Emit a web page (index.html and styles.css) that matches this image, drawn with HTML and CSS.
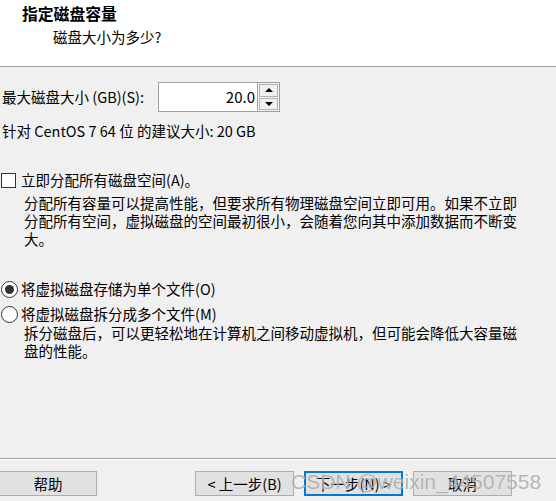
FILE: index.html
```
<!DOCTYPE html>
<html lang="zh-CN">
<head>
<meta charset="utf-8">
<title>指定磁盘容量</title>
<link rel="stylesheet" href="styles.css">
</head>
<body>
<div class="dialog">
  <header class="head">
    <div class="title">指定磁盘容量</div>
    <div class="subtitle">磁盘大小为多少?</div>
  </header>
  <main class="content">
    <div class="size-row">
      <span class="label">最大磁盘大小 (GB)(S):</span>
      <div class="spin">
        <div class="spin-input">20.0</div>
        <div class="spin-btns">
          <div class="spin-btn"><span class="tri-up"></span></div>
          <div class="spin-btn"><span class="tri-down"></span></div>
        </div>
      </div>
    </div>
    <div class="recommend">针对 CentOS 7 64 位 的建议大小: 20 GB</div>
    <div class="check-row">
      <span class="checkbox"></span>
      <span>立即分配所有磁盘空间(A)。</span>
    </div>
    <p class="desc desc1">分配所有容量可以提高性能，但要求所有物理磁盘空间立即可用。如果不立即分配所有空间，虚拟磁盘的空间最初很小，会随着您向其中添加数据而不断变大。</p>
    <div class="radio-row r1">
      <span class="radio checked"></span>
      <span>将虚拟磁盘存储为单个文件(O)</span>
    </div>
    <div class="radio-row r2">
      <span class="radio"></span>
      <span>将虚拟磁盘拆分成多个文件(M)</span>
    </div>
    <p class="desc desc2">拆分磁盘后，可以更轻松地在计算机之间移动虚拟机，但可能会降低大容量磁盘的性能。</p>
  </main>
  <footer class="foot">
    <div class="btn help">帮助</div>
    <div class="nav">
      <div class="btn">&lt; 上一步(B)</div>
      <div class="btn primary">下一步(N) &gt;</div>
      <div class="btn">取消</div>
    </div>
  </footer>
  <div class="watermark">CSDN @weixin_44507558</div>
</div>
</body>
</html>
```

FILE: styles.css
```
* { box-sizing: border-box; }
html, body { margin: 0; padding: 0; }
body {
  width: 556px;
  height: 501px;
  overflow: hidden;
  background: #f0f0f0;
  font-family: "Noto Sans CJK SC", sans-serif;
  font-size: 14.5px;
  color: #000;
}
.dialog {
  position: relative;
  width: 556px;
  height: 501px;
  display: flex;
  flex-direction: column;
}
.head {
  height: 67px;
  background: #fff;
  border-bottom: 1px solid #a0a0a0;
  padding: 5px 0 0 22px;
  line-height: 18px;
}
.title {
  font-weight: bold;
  font-size: 15.8px;
}
.subtitle {
  margin-top: 5px;
  padding-left: 31px;
}
.content {
  height: 392px;
  padding: 15px 0 0 2px;
  line-height: 18px;
  border-bottom: 1px solid #a0a0a0;
  box-shadow: 0 1px 0 #fff;
}
.size-row {
  display: flex;
  align-items: center;
  height: 30px;
}
.label { width: 156px; }
.spin {
  display: flex;
  height: 30px;
}
.spin-input {
  width: 100px;
  height: 30px;
  background: #fff;
  border: 1px solid #a0a0a0;
  text-align: right;
  padding: 5px 2px 0 0;
  font-size: 15px;
}
.spin-btns {
  width: 22px;
  height: 30px;
  border: 1px solid #a0a0a0;
  border-left: none;
  display: flex;
  flex-direction: column;
  padding: 1px;
  gap: 1px;
}
.spin-btn {
  flex: 1;
  border: 1px solid #b4b4b4;
  background: #f0f0f0;
  display: flex;
  align-items: center;
  justify-content: center;
}
.tri-up, .tri-down {
  width: 0; height: 0;
  border-left: 4px solid transparent;
  border-right: 4px solid transparent;
}
.tri-up { border-bottom: 4px solid #000; }
.tri-down { border-top: 4px solid #000; }
.recommend { margin-top: 10px; }
.check-row {
  margin-top: 31px;
  display: flex;
  align-items: center;
  gap: 5px;
  margin-left: -1px;
}
.checkbox {
  width: 15px;
  height: 15px;
  background: #fff;
  border: 1px solid #333;
}
.desc {
  margin: 5px 0 0 22px;
  width: 501px;
}
.radio-row {
  display: flex;
  align-items: center;
  gap: 3px;
  margin-left: -1px;
}
.r1 { margin-top: 32px; }
.r2 { margin-top: 7px; }
.radio {
  width: 17px;
  height: 17px;
  border-radius: 50%;
  border: 1px solid #333;
  background: #fff;
  display: flex;
  align-items: center;
  justify-content: center;
}
.radio.checked::after {
  content: "";
  width: 9px;
  height: 9px;
  border-radius: 50%;
  background: #333;
}
.desc2 { margin-top: 1px; }
.foot {
  display: flex;
  justify-content: space-between;
  padding: 12px 44px 0 0;
}
.btn {
  width: 99px;
  height: 25px;
  background: #e1e1e1;
  border: 1px solid #adadad;
  display: flex;
  align-items: center;
  justify-content: center;
  line-height: 18px;
}
.btn.help { width: 98px; margin-left: -1px; }
.btn.primary { border: 2px solid #0078d7; }
.nav { display: flex; gap: 10px; }
.watermark {
  position: absolute;
  left: 291px;
  top: 470px;
  font-family: "Liberation Sans", Arial, sans-serif;
  font-size: 21px;
  color: rgba(120, 120, 120, 0.55);
  text-shadow: 0 0 1px rgba(255,255,255,0.8);
  white-space: nowrap;
  pointer-events: none;
}
```
